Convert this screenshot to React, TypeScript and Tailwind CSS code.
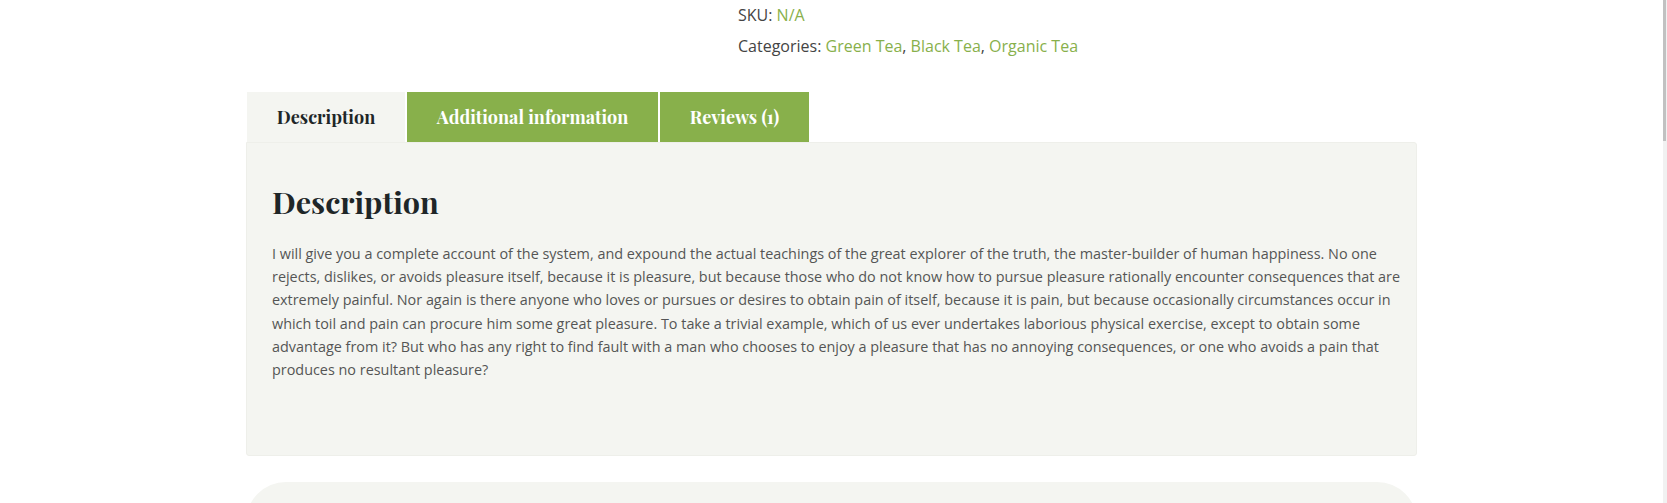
import React from 'react';

const body = `I will give you a complete account of the system, and expound the actual teachings of the great explorer of the truth, the master-builder of human happiness. No one rejects, dislikes, or avoids pleasure itself, because it is pleasure, but because those who do not know how to pursue pleasure rationally encounter consequences that are extremely painful. Nor again is there anyone who loves or pursues or desires to obtain pain of itself, because it is pain, but because occasionally circumstances occur in which toil and pain can procure him some great pleasure. To take a trivial example, which of us ever undertakes laborious physical exercise, except to obtain some advantage from it? But who has any right to find fault with a man who chooses to enjoy a pleasure that has no annoying consequences, or one who avoids a pain that produces no resultant pleasure?`;

const serif = "font-['Playfair_Display','Liberation_Serif',serif]";

const App: React.FC = () => {
  return (
    <div className="flex h-[503px] overflow-hidden bg-white font-['Open_Sans',sans-serif]">
      <div className="flex-1">
        <div className="mx-auto w-[1171px]">
          {/* product meta */}
          <div className="pl-[492px] text-[16px] leading-[31px] text-[#444]">
            <div>
              SKU: <span className="text-[#88b04b]">N/A</span>
            </div>
            <div>
              Categories: <a className="text-[#88b04b]">Green Tea</a>, <a className="text-[#88b04b]">Black Tea</a>,{' '}
              <a className="text-[#88b04b]">Organic Tea</a>
            </div>
          </div>

          {/* tabs */}
          <div className="mt-[30px] flex gap-[2px] pl-[1px]">
            <div className={`flex h-[50px] w-[158px] items-center justify-center bg-[#f4f5f1] text-[18px] font-bold text-[#1e2628] ${serif}`}>
              Description
            </div>
            <div className={`flex h-[50px] w-[251px] items-center justify-center bg-[#88b04b] text-[18px] font-bold text-white ${serif}`}>
              Additional information
            </div>
            <div className={`flex h-[50px] w-[149px] items-center justify-center bg-[#88b04b] text-[18px] font-bold text-white ${serif}`}>
              Reviews (1)
            </div>
          </div>

          {/* panel */}
          <div className="h-[314px] rounded-b-[3px] rounded-tr-[3px] border border-[#eeefea] bg-[#f4f5f1] pl-[25px] pr-[8px] pt-[39px]">
            <h2 className={`text-[30.5px] font-bold leading-[40px] text-[#1e2628] ${serif}`}>Description</h2>
            <p className="mt-[20px] text-[14.4px] leading-[23.2px] text-[#555]">{body}</p>
          </div>

          {/* next card */}
          <div className="mt-[26px] h-[80px] rounded-t-[40px] bg-[#f4f5f1]" />
        </div>
      </div>
      <div className="w-[4px] bg-[#f1f1f1]">
        <div className="h-[141px] w-[3px] bg-[#c1c1c1]" />
      </div>
    </div>
  );
};

export default App;
